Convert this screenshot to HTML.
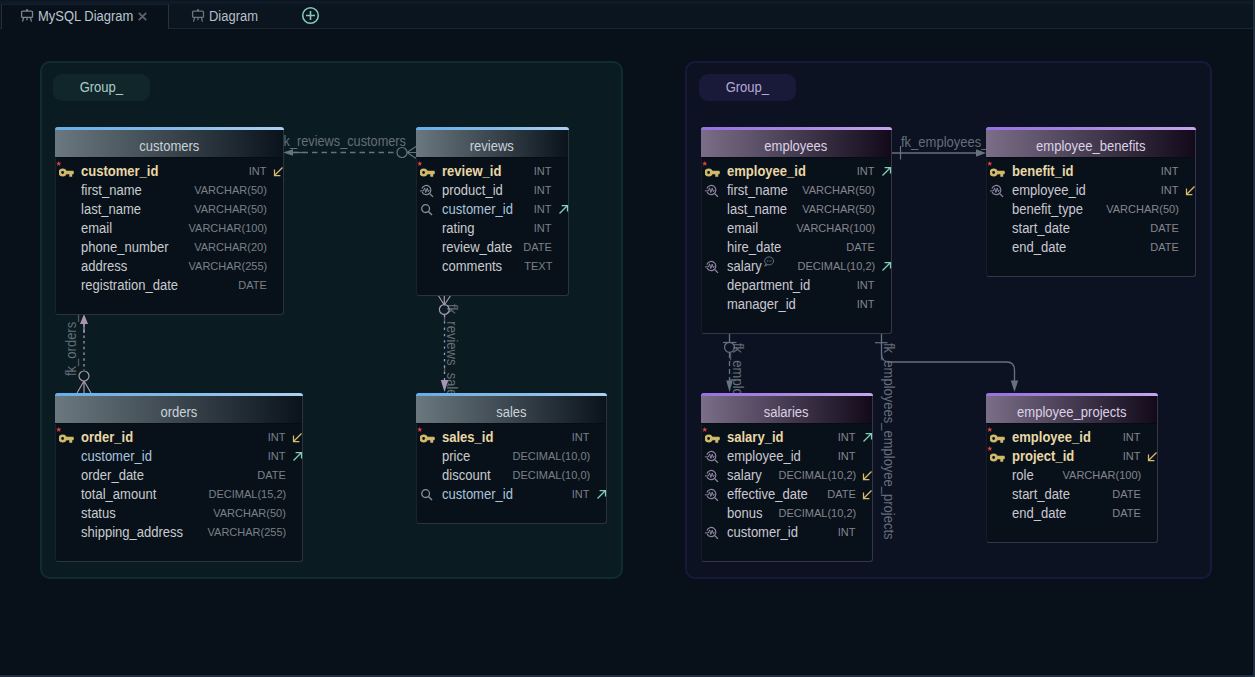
<!DOCTYPE html><html><head><meta charset="utf-8"><style>
*{box-sizing:border-box;margin:0;padding:0}
html,body{width:1255px;height:677px;overflow:hidden;background:#08111a;font-family:"Liberation Sans",sans-serif}
#root{position:relative;width:1255px;height:677px;overflow:hidden;background:#08111a}
.abs{position:absolute}
.tabbar{position:absolute;left:0;top:0;width:1255px;height:29px;background:#0a1520;border-bottom:1px solid #1a2531}
.topline{position:absolute;left:0;top:0;width:1255px;height:4px;background:linear-gradient(#0a121c,#0e1b28 40%,#0d1a26)}
.tab{position:absolute;top:4px;height:26px;font-size:14px;line-height:25px;color:#bcc6cf;transform:scaleX(0.925);transform-origin:0 0}
.grp{position:absolute;border-radius:10px;border:1.5px solid}
.lbl{position:absolute;border-radius:9px;font-size:14px;line-height:26px;text-align:center}
.lbl span{display:inline-block;transform:scaleX(0.93)}
.tb{position:absolute;background:#08111a;border:1px solid;border-radius:3px;overflow:visible}
.acc{position:absolute;left:0;right:-1px;top:0;height:3px;border-radius:3px 3px 0 0}
.hd{position:absolute;left:-1px;top:-1px;right:0;height:31px;border-radius:3px 3px 0 0;padding-top:3px;text-align:center;font-size:13px;line-height:19px;border-bottom:1px solid #060c12}
.hd span{position:relative;top:7px;display:inline-block;font-size:14px;transform:scaleX(0.93);transform-origin:50% 0}
.rw{position:absolute;left:0;right:0;height:19px;font-size:13px;line-height:19px;white-space:nowrap}
.nm{position:absolute;left:25px;top:0;font-size:14px;transform:scaleX(0.93);transform-origin:0 0}
.pk{font-weight:bold;color:#e8d8a6}
.ty{position:absolute;right:16px;font-size:11.5px;line-height:19px;top:0px;transform:scaleX(0.957);transform-origin:100% 0}
.ar{position:absolute;right:-1px;top:4px;width:11px;height:11px;line-height:0}
.star{position:absolute;left:0px;top:-1.5px;line-height:0}
.key{position:absolute;left:3px;top:6px;line-height:0}
.sa{position:absolute;left:2px;top:2px;line-height:0}
.cm{position:relative;top:-4px;left:2px;line-height:0}
svg{display:block}
.cm svg{display:inline-block}
</style></head><body><div id="root">
<div class="tabbar"></div><div class="topline"></div>
<div class="abs" style="left:1px;top:4px;width:168px;height:25px;background:#08111a;border-left:1px solid #223040;border-right:1px solid #263240;border-top:1px solid #18202c"></div>
<div class="abs" style="left:20px;top:8px"><svg width="15" height="15" viewBox="0 0 15 15"><rect x="1.6" y="3.1" width="10.9" height="6.3" rx="1" fill="none" stroke="#7c848c" stroke-width="1.3"/><rect x="6" y="0.9" width="1.9" height="2.3" rx="0.6" fill="#7c848c"/><path d="M3.6 9.8L2.5 13.6M10.4 9.8L11.5 13.6M7 9.8V12.3" stroke="#7c848c" stroke-width="1.3"/></svg></div>
<div class="tab" style="left:38px">MySQL Diagram</div>
<div class="abs" style="left:138px;top:12.3px"><svg width="9" height="9" viewBox="0 0 9 9"><path d="M0.8 0.8L8.2 8.2M8.2 0.8L0.8 8.2" stroke="#5e6268" stroke-width="1.9"/></svg></div>
<div class="abs" style="left:191px;top:8px"><svg width="15" height="15" viewBox="0 0 15 15"><rect x="1.6" y="3.1" width="10.9" height="6.3" rx="1" fill="none" stroke="#6c747c" stroke-width="1.3"/><rect x="6" y="0.9" width="1.9" height="2.3" rx="0.6" fill="#6c747c"/><path d="M3.6 9.8L2.5 13.6M10.4 9.8L11.5 13.6M7 9.8V12.3" stroke="#6c747c" stroke-width="1.3"/></svg></div>
<div class="tab" style="left:209px;color:#b8bfc6">Diagram</div>
<div class="abs" style="left:301px;top:5.5px"><svg width="19" height="19" viewBox="0 0 19 19"><circle cx="9.5" cy="9.5" r="7.8" fill="none" stroke="#84c6b8" stroke-width="1.6"/><path d="M9.5 5V14M5 9.5H14" stroke="#84c6b8" stroke-width="1.6"/></svg></div>
<div class="grp" style="left:40px;top:61px;width:583px;height:518px;background:#0a1b21;border-color:#0f2c32;border-width:2px"></div>
<div class="lbl" style="left:53px;top:74px;width:97px;height:27px;background:#11262a;color:#a9cdc8"><span>Group_</span></div>
<div class="grp" style="left:685px;top:61px;width:527px;height:518px;background:#0c1222;border-color:#19193a;border-width:2px"></div>
<div class="lbl" style="left:699px;top:74px;width:97px;height:27px;background:#19193a;color:#b6aad4"><span>Group_</span></div>
<svg class="abs" style="left:0;top:0" width="1255" height="677" viewBox="0 0 1255 677">
<text transform="translate(280 146) scale(0.91 1)" font-size="14" fill="#646e78" font-family="Liberation Sans">fk_reviews_customers</text>
<path d="M293 152.5H397" stroke="#66727e" stroke-width="1.3" stroke-dasharray="5.5 4" fill="none"/>
<path d="M283 152.5L293 149.2V155.8Z" fill="#66727e"/><path d="M293 152.5H306" stroke="#66727e" stroke-width="1.3"/>
<circle cx="402" cy="152.5" r="5" fill="none" stroke="#66727e" stroke-width="1.2"/>
<path d="M407 152.5L416 146.5M407 152.5H416M407 152.5L417 159" stroke="#66727e" stroke-width="1.2" fill="none"/>
<text transform="translate(76.3 376) rotate(-90) scale(0.93 1)" font-size="14" fill="#646e78" font-family="Liberation Sans">fk_orders_customers</text>
<path d="M84 324V370" stroke="#a896b0" stroke-width="1.3" stroke-dasharray="2.5 3.2" fill="none"/>
<path d="M84 314L80 324H88Z" fill="#a896b0"/><path d="M84 323V333" stroke="#a896b0" stroke-width="1.3"/>
<circle cx="84" cy="376" r="5" fill="none" stroke="#a896b0" stroke-width="1.2"/>
<path d="M84 381L77 393M84 381V393M84 381L91 393" stroke="#a896b0" stroke-width="1.2" fill="none"/>
<text transform="translate(447 304) rotate(90) scale(0.93 1)" font-size="14" fill="#646e78" font-family="Liberation Sans">fk_reviews_sales</text>
<path d="M444.5 315V381" stroke="#a896b0" stroke-width="1.3" stroke-dasharray="2.3 4" fill="none"/>
<path d="M444.5 392L440.8 380H448.2Z" fill="#a896b0"/>
<circle cx="444.3" cy="309.5" r="4.9" fill="none" stroke="#a896b0" stroke-width="1.2"/>
<path d="M444.3 305L438 295M444.3 305V295M444.3 305L451 295" stroke="#a896b0" stroke-width="1.2" fill="none"/>
<text transform="translate(901 146.5) scale(0.93 1)" font-size="14" fill="#646e78" font-family="Liberation Sans">fk_employees_benefits</text>
<path d="M891 153H977" stroke="#66727e" stroke-width="1.4" fill="none"/>
<path d="M986 153L976 149.3V156.7Z" fill="#66727e"/><path d="M900.5 146V159.5" stroke="#66727e" stroke-width="1.2"/>
<text transform="translate(732.5 343) rotate(90) scale(0.93 1)" font-size="14" fill="#646e78" font-family="Liberation Sans">fk_employees_salaries</text>
<path d="M729.5 333V342" stroke="#66727e" stroke-width="1.3" fill="none" /><path d="M729.5 353V381" stroke="#66727e" stroke-width="1.3" fill="none" stroke-dasharray="5 3"/>
<path d="M729.5 392L726.2 380.5H732.8Z" fill="#66727e"/><path d="M723 342.5H736.5" stroke="#66727e" stroke-width="1.2"/>
<circle cx="729.5" cy="347.3" r="5" fill="none" stroke="#66727e" stroke-width="1.2"/>
<text transform="translate(884 343) rotate(90) scale(0.93 1)" font-size="14" fill="#646e78" font-family="Liberation Sans">fk_employees_employee_projects</text>
<path d="M881.5 333V354Q881.5 362 889.5 362H1006.5Q1014.5 362 1014.5 370V381" stroke="#66727e" stroke-width="1.3" fill="none"/>
<path d="M1014.5 392L1010.8 380.5H1018.2Z" fill="#66727e"/><path d="M875 342.7H887.5" stroke="#66727e" stroke-width="1.2"/>
</svg>
<div class="tb" style="left:55px;top:127px;width:229px;height:188px;border-color:#18222c;border-right-color:#29343e;border-bottom-color:#29343e">
<div class="hd" style="background:linear-gradient(90deg,#6b7880,#0a131b)"><div class="acc" style="background:linear-gradient(90deg,#68aeea,#84bae8 50%,#acd0f0)"></div><span style="color:#c9d3da">customers</span></div>
<div class="rw" style="top:34px"><span class="star"><svg width="5.5" height="5.5" viewBox="0 0 10 10"><path d="M5 0L6.2 3.4H9.8L6.9 5.6L8 9.2L5 7L2 9.2L3.1 5.6L0.2 3.4H3.8Z" fill="#e0433f"/></svg></span><span class="key"><svg class="ic" width="16" height="10" viewBox="0 0 16 10"><circle cx="3.6" cy="4.5" r="2.75" fill="none" stroke="#d0b86a" stroke-width="2.7"/><path d="M6 2.8H14.3L15 4.5L14.3 6.2H13.2V8.7H10.3V6.2H6Z" fill="#d0b86a"/></svg></span><span class="nm pk" style="">customer_id</span><span class="ty" style="color:#7a8086">INT</span><span class="ar"><svg width="11" height="11" viewBox="0 0 11 11"><path d="M9.5 1.5L1.5 9.5M1.5 3.6V9.5H7.4" fill="none" stroke="#d6bb6a" stroke-width="1.25"/></svg></span></div>
<div class="rw" style="top:53px"><span class="nm" style="color:#c9ccce">first_name</span><span class="ty" style="color:#7a8086">VARCHAR(50)</span></div>
<div class="rw" style="top:72px"><span class="nm" style="color:#c9ccce">last_name</span><span class="ty" style="color:#7a8086">VARCHAR(50)</span></div>
<div class="rw" style="top:91px"><span class="nm" style="color:#c9ccce">email</span><span class="ty" style="color:#7a8086">VARCHAR(100)</span></div>
<div class="rw" style="top:110px"><span class="nm" style="color:#c9ccce">phone_number</span><span class="ty" style="color:#7a8086">VARCHAR(20)</span></div>
<div class="rw" style="top:129px"><span class="nm" style="color:#c9ccce">address</span><span class="ty" style="color:#7a8086">VARCHAR(255)</span></div>
<div class="rw" style="top:148px"><span class="nm" style="color:#c9ccce">registration_date</span><span class="ty" style="color:#7a8086">DATE</span></div>
</div>
<div class="tb" style="left:416px;top:127px;width:153px;height:169px;border-color:#18222c;border-right-color:#29343e;border-bottom-color:#29343e">
<div class="hd" style="background:linear-gradient(90deg,#6b7880,#0a131b)"><div class="acc" style="background:linear-gradient(90deg,#68aeea,#84bae8 50%,#acd0f0)"></div><span style="color:#c9d3da">reviews</span></div>
<div class="rw" style="top:34px"><span class="star"><svg width="5.5" height="5.5" viewBox="0 0 10 10"><path d="M5 0L6.2 3.4H9.8L6.9 5.6L8 9.2L5 7L2 9.2L3.1 5.6L0.2 3.4H3.8Z" fill="#e0433f"/></svg></span><span class="key"><svg class="ic" width="16" height="10" viewBox="0 0 16 10"><circle cx="3.6" cy="4.5" r="2.75" fill="none" stroke="#d0b86a" stroke-width="2.7"/><path d="M6 2.8H14.3L15 4.5L14.3 6.2H13.2V8.7H10.3V6.2H6Z" fill="#d0b86a"/></svg></span><span class="nm pk" style="">review_id</span><span class="ty" style="color:#7a8086">INT</span></div>
<div class="rw" style="top:53px"><span class="sa"><svg class="ic" width="16" height="16" viewBox="0 0 16 16"><path d="M2.9 5.6A4.6 4.6 0 1 1 3.1 9" fill="none" stroke="#88909a" stroke-width="1.15"/><path d="M10.9 10.7L14 13.9" stroke="#88909a" stroke-width="1.25"/><path d="M0.9 7.9H4.4L5.6 4.9L6.8 9.5L8.2 5.1L9.4 8.7L10.3 6.9" fill="none" stroke="#88909a" stroke-width="1"/></svg></span><span class="nm" style="color:#c9ccce">product_id</span><span class="ty" style="color:#7a8086">INT</span></div>
<div class="rw" style="top:72px"><span class="sa"><svg class="ic" width="16" height="16" viewBox="0 0 16 16"><circle cx="6.6" cy="6.6" r="3.9" fill="none" stroke="#88909a" stroke-width="1.3"/><path d="M9.4 9.4L13 13" stroke="#88909a" stroke-width="1.4"/></svg></span><span class="nm" style="color:#abc4dc">customer_id</span><span class="ty" style="color:#7a8086">INT</span><span class="ar"><svg width="11" height="11" viewBox="0 0 11 11"><path d="M1.5 9.5L9.5 1.5M3.6 1.5H9.5V7.4" fill="none" stroke="#84ceb8" stroke-width="1.25"/></svg></span></div>
<div class="rw" style="top:91px"><span class="nm" style="color:#c9ccce">rating</span><span class="ty" style="color:#7a8086">INT</span></div>
<div class="rw" style="top:110px"><span class="nm" style="color:#c9ccce">review_date</span><span class="ty" style="color:#7a8086">DATE</span></div>
<div class="rw" style="top:129px"><span class="nm" style="color:#c9ccce">comments</span><span class="ty" style="color:#7a8086">TEXT</span></div>
</div>
<div class="tb" style="left:55px;top:393px;width:248px;height:169px;border-color:#18222c;border-right-color:#29343e;border-bottom-color:#29343e">
<div class="hd" style="background:linear-gradient(90deg,#6b7880,#0a131b)"><div class="acc" style="background:linear-gradient(90deg,#68aeea,#84bae8 50%,#acd0f0)"></div><span style="color:#c9d3da">orders</span></div>
<div class="rw" style="top:34px"><span class="star"><svg width="5.5" height="5.5" viewBox="0 0 10 10"><path d="M5 0L6.2 3.4H9.8L6.9 5.6L8 9.2L5 7L2 9.2L3.1 5.6L0.2 3.4H3.8Z" fill="#e0433f"/></svg></span><span class="key"><svg class="ic" width="16" height="10" viewBox="0 0 16 10"><circle cx="3.6" cy="4.5" r="2.75" fill="none" stroke="#d0b86a" stroke-width="2.7"/><path d="M6 2.8H14.3L15 4.5L14.3 6.2H13.2V8.7H10.3V6.2H6Z" fill="#d0b86a"/></svg></span><span class="nm pk" style="">order_id</span><span class="ty" style="color:#7a8086">INT</span><span class="ar"><svg width="11" height="11" viewBox="0 0 11 11"><path d="M9.5 1.5L1.5 9.5M1.5 3.6V9.5H7.4" fill="none" stroke="#d6bb6a" stroke-width="1.25"/></svg></span></div>
<div class="rw" style="top:53px"><span class="nm" style="color:#abc4dc">customer_id</span><span class="ty" style="color:#7a8086">INT</span><span class="ar"><svg width="11" height="11" viewBox="0 0 11 11"><path d="M1.5 9.5L9.5 1.5M3.6 1.5H9.5V7.4" fill="none" stroke="#84ceb8" stroke-width="1.25"/></svg></span></div>
<div class="rw" style="top:72px"><span class="nm" style="color:#c9ccce">order_date</span><span class="ty" style="color:#7a8086">DATE</span></div>
<div class="rw" style="top:91px"><span class="nm" style="color:#c9ccce">total_amount</span><span class="ty" style="color:#7a8086">DECIMAL(15,2)</span></div>
<div class="rw" style="top:110px"><span class="nm" style="color:#c9ccce">status</span><span class="ty" style="color:#7a8086">VARCHAR(50)</span></div>
<div class="rw" style="top:129px"><span class="nm" style="color:#c9ccce">shipping_address</span><span class="ty" style="color:#7a8086">VARCHAR(255)</span></div>
</div>
<div class="tb" style="left:416px;top:393px;width:191px;height:131px;border-color:#18222c;border-right-color:#29343e;border-bottom-color:#29343e">
<div class="hd" style="background:linear-gradient(90deg,#6b7880,#0a131b)"><div class="acc" style="background:linear-gradient(90deg,#68aeea,#84bae8 50%,#acd0f0)"></div><span style="color:#c9d3da">sales</span></div>
<div class="rw" style="top:34px"><span class="star"><svg width="5.5" height="5.5" viewBox="0 0 10 10"><path d="M5 0L6.2 3.4H9.8L6.9 5.6L8 9.2L5 7L2 9.2L3.1 5.6L0.2 3.4H3.8Z" fill="#e0433f"/></svg></span><span class="key"><svg class="ic" width="16" height="10" viewBox="0 0 16 10"><circle cx="3.6" cy="4.5" r="2.75" fill="none" stroke="#d0b86a" stroke-width="2.7"/><path d="M6 2.8H14.3L15 4.5L14.3 6.2H13.2V8.7H10.3V6.2H6Z" fill="#d0b86a"/></svg></span><span class="nm pk" style="">sales_id</span><span class="ty" style="color:#7a8086">INT</span></div>
<div class="rw" style="top:53px"><span class="nm" style="color:#c9ccce">price</span><span class="ty" style="color:#7a8086">DECIMAL(10,0)</span></div>
<div class="rw" style="top:72px"><span class="nm" style="color:#c9ccce">discount</span><span class="ty" style="color:#7a8086">DECIMAL(10,0)</span></div>
<div class="rw" style="top:91px"><span class="sa"><svg class="ic" width="16" height="16" viewBox="0 0 16 16"><circle cx="6.6" cy="6.6" r="3.9" fill="none" stroke="#88909a" stroke-width="1.3"/><path d="M9.4 9.4L13 13" stroke="#88909a" stroke-width="1.4"/></svg></span><span class="nm" style="color:#abc4dc">customer_id</span><span class="ty" style="color:#7a8086">INT</span><span class="ar"><svg width="11" height="11" viewBox="0 0 11 11"><path d="M1.5 9.5L9.5 1.5M3.6 1.5H9.5V7.4" fill="none" stroke="#84ceb8" stroke-width="1.25"/></svg></span></div>
</div>
<div class="tb" style="left:701px;top:127px;width:191px;height:207px;border-color:#1a1a28;border-right-color:#363648;border-bottom-color:#363648">
<div class="hd" style="background:linear-gradient(90deg,#7a6e88,#12091a)"><div class="acc" style="background:linear-gradient(90deg,#9a6ee4,#aa88e0 50%,#c6a6ee)"></div><span style="color:#dcd2e6">employees</span></div>
<div class="rw" style="top:34px"><span class="star"><svg width="5.5" height="5.5" viewBox="0 0 10 10"><path d="M5 0L6.2 3.4H9.8L6.9 5.6L8 9.2L5 7L2 9.2L3.1 5.6L0.2 3.4H3.8Z" fill="#e0433f"/></svg></span><span class="key"><svg class="ic" width="16" height="10" viewBox="0 0 16 10"><circle cx="3.6" cy="4.5" r="2.75" fill="none" stroke="#d0b86a" stroke-width="2.7"/><path d="M6 2.8H14.3L15 4.5L14.3 6.2H13.2V8.7H10.3V6.2H6Z" fill="#d0b86a"/></svg></span><span class="nm pk" style="">employee_id</span><span class="ty" style="color:#86848c">INT</span><span class="ar"><svg width="11" height="11" viewBox="0 0 11 11"><path d="M1.5 9.5L9.5 1.5M3.6 1.5H9.5V7.4" fill="none" stroke="#84ceb8" stroke-width="1.25"/></svg></span></div>
<div class="rw" style="top:53px"><span class="sa"><svg class="ic" width="16" height="16" viewBox="0 0 16 16"><path d="M2.9 5.6A4.6 4.6 0 1 1 3.1 9" fill="none" stroke="#8e86a0" stroke-width="1.15"/><path d="M10.9 10.7L14 13.9" stroke="#8e86a0" stroke-width="1.25"/><path d="M0.9 7.9H4.4L5.6 4.9L6.8 9.5L8.2 5.1L9.4 8.7L10.3 6.9" fill="none" stroke="#8e86a0" stroke-width="1"/></svg></span><span class="nm" style="color:#cbc8d2">first_name</span><span class="ty" style="color:#86848c">VARCHAR(50)</span></div>
<div class="rw" style="top:72px"><span class="nm" style="color:#cbc8d2">last_name</span><span class="ty" style="color:#86848c">VARCHAR(50)</span></div>
<div class="rw" style="top:91px"><span class="nm" style="color:#cbc8d2">email</span><span class="ty" style="color:#86848c">VARCHAR(100)</span></div>
<div class="rw" style="top:110px"><span class="nm" style="color:#cbc8d2">hire_date</span><span class="ty" style="color:#86848c">DATE</span></div>
<div class="rw" style="top:129px"><span class="sa"><svg class="ic" width="16" height="16" viewBox="0 0 16 16"><path d="M2.9 5.6A4.6 4.6 0 1 1 3.1 9" fill="none" stroke="#8e86a0" stroke-width="1.15"/><path d="M10.9 10.7L14 13.9" stroke="#8e86a0" stroke-width="1.25"/><path d="M0.9 7.9H4.4L5.6 4.9L6.8 9.5L8.2 5.1L9.4 8.7L10.3 6.9" fill="none" stroke="#8e86a0" stroke-width="1"/></svg></span><span class="nm" style="color:#cbc8d2">salary<span class="cm"><svg width="12" height="11" viewBox="0 0 12 11"><ellipse cx="6.3" cy="4.9" rx="4.8" ry="4" fill="none" stroke="#767c86" stroke-width="0.9"/><path d="M2.6 8L1.6 10.2L4.6 8.7" fill="none" stroke="#767c86" stroke-width="0.9"/><path d="M3.9 5H5.1M5.9 5H6.7M7.5 5H8.7" stroke="#767c86" stroke-width="1"/></svg></span></span><span class="ty" style="color:#86848c">DECIMAL(10,2)</span><span class="ar"><svg width="11" height="11" viewBox="0 0 11 11"><path d="M1.5 9.5L9.5 1.5M3.6 1.5H9.5V7.4" fill="none" stroke="#84ceb8" stroke-width="1.25"/></svg></span></div>
<div class="rw" style="top:148px"><span class="nm" style="color:#cbc8d2">department_id</span><span class="ty" style="color:#86848c">INT</span></div>
<div class="rw" style="top:167px"><span class="nm" style="color:#cbc8d2">manager_id</span><span class="ty" style="color:#86848c">INT</span></div>
</div>
<div class="tb" style="left:986px;top:127px;width:210px;height:150px;border-color:#1a1a28;border-right-color:#363648;border-bottom-color:#363648">
<div class="hd" style="background:linear-gradient(90deg,#7a6e88,#12091a)"><div class="acc" style="background:linear-gradient(90deg,#9a6ee4,#aa88e0 50%,#c6a6ee)"></div><span style="color:#dcd2e6">employee_benefits</span></div>
<div class="rw" style="top:34px"><span class="star"><svg width="5.5" height="5.5" viewBox="0 0 10 10"><path d="M5 0L6.2 3.4H9.8L6.9 5.6L8 9.2L5 7L2 9.2L3.1 5.6L0.2 3.4H3.8Z" fill="#e0433f"/></svg></span><span class="key"><svg class="ic" width="16" height="10" viewBox="0 0 16 10"><circle cx="3.6" cy="4.5" r="2.75" fill="none" stroke="#d0b86a" stroke-width="2.7"/><path d="M6 2.8H14.3L15 4.5L14.3 6.2H13.2V8.7H10.3V6.2H6Z" fill="#d0b86a"/></svg></span><span class="nm pk" style="">benefit_id</span><span class="ty" style="color:#86848c">INT</span></div>
<div class="rw" style="top:53px"><span class="sa"><svg class="ic" width="16" height="16" viewBox="0 0 16 16"><path d="M2.9 5.6A4.6 4.6 0 1 1 3.1 9" fill="none" stroke="#8e86a0" stroke-width="1.15"/><path d="M10.9 10.7L14 13.9" stroke="#8e86a0" stroke-width="1.25"/><path d="M0.9 7.9H4.4L5.6 4.9L6.8 9.5L8.2 5.1L9.4 8.7L10.3 6.9" fill="none" stroke="#8e86a0" stroke-width="1"/></svg></span><span class="nm" style="color:#cbc8d2">employee_id</span><span class="ty" style="color:#86848c">INT</span><span class="ar"><svg width="11" height="11" viewBox="0 0 11 11"><path d="M9.5 1.5L1.5 9.5M1.5 3.6V9.5H7.4" fill="none" stroke="#d6bb6a" stroke-width="1.25"/></svg></span></div>
<div class="rw" style="top:72px"><span class="nm" style="color:#cbc8d2">benefit_type</span><span class="ty" style="color:#86848c">VARCHAR(50)</span></div>
<div class="rw" style="top:91px"><span class="nm" style="color:#cbc8d2">start_date</span><span class="ty" style="color:#86848c">DATE</span></div>
<div class="rw" style="top:110px"><span class="nm" style="color:#cbc8d2">end_date</span><span class="ty" style="color:#86848c">DATE</span></div>
</div>
<div class="tb" style="left:701px;top:393px;width:172px;height:169px;border-color:#1a1a28;border-right-color:#363648;border-bottom-color:#363648">
<div class="hd" style="background:linear-gradient(90deg,#7a6e88,#12091a)"><div class="acc" style="background:linear-gradient(90deg,#9a6ee4,#aa88e0 50%,#c6a6ee)"></div><span style="color:#dcd2e6">salaries</span></div>
<div class="rw" style="top:34px"><span class="star"><svg width="5.5" height="5.5" viewBox="0 0 10 10"><path d="M5 0L6.2 3.4H9.8L6.9 5.6L8 9.2L5 7L2 9.2L3.1 5.6L0.2 3.4H3.8Z" fill="#e0433f"/></svg></span><span class="key"><svg class="ic" width="16" height="10" viewBox="0 0 16 10"><circle cx="3.6" cy="4.5" r="2.75" fill="none" stroke="#d0b86a" stroke-width="2.7"/><path d="M6 2.8H14.3L15 4.5L14.3 6.2H13.2V8.7H10.3V6.2H6Z" fill="#d0b86a"/></svg></span><span class="nm pk" style="">salary_id</span><span class="ty" style="color:#86848c">INT</span><span class="ar"><svg width="11" height="11" viewBox="0 0 11 11"><path d="M1.5 9.5L9.5 1.5M3.6 1.5H9.5V7.4" fill="none" stroke="#84ceb8" stroke-width="1.25"/></svg></span></div>
<div class="rw" style="top:53px"><span class="sa"><svg class="ic" width="16" height="16" viewBox="0 0 16 16"><path d="M2.9 5.6A4.6 4.6 0 1 1 3.1 9" fill="none" stroke="#8e86a0" stroke-width="1.15"/><path d="M10.9 10.7L14 13.9" stroke="#8e86a0" stroke-width="1.25"/><path d="M0.9 7.9H4.4L5.6 4.9L6.8 9.5L8.2 5.1L9.4 8.7L10.3 6.9" fill="none" stroke="#8e86a0" stroke-width="1"/></svg></span><span class="nm" style="color:#cbc8d2">employee_id</span><span class="ty" style="color:#86848c">INT</span></div>
<div class="rw" style="top:72px"><span class="sa"><svg class="ic" width="16" height="16" viewBox="0 0 16 16"><path d="M2.9 5.6A4.6 4.6 0 1 1 3.1 9" fill="none" stroke="#8e86a0" stroke-width="1.15"/><path d="M10.9 10.7L14 13.9" stroke="#8e86a0" stroke-width="1.25"/><path d="M0.9 7.9H4.4L5.6 4.9L6.8 9.5L8.2 5.1L9.4 8.7L10.3 6.9" fill="none" stroke="#8e86a0" stroke-width="1"/></svg></span><span class="nm" style="color:#cbc8d2">salary</span><span class="ty" style="color:#86848c">DECIMAL(10,2)</span><span class="ar"><svg width="11" height="11" viewBox="0 0 11 11"><path d="M9.5 1.5L1.5 9.5M1.5 3.6V9.5H7.4" fill="none" stroke="#d6bb6a" stroke-width="1.25"/></svg></span></div>
<div class="rw" style="top:91px"><span class="sa"><svg class="ic" width="16" height="16" viewBox="0 0 16 16"><path d="M2.9 5.6A4.6 4.6 0 1 1 3.1 9" fill="none" stroke="#8e86a0" stroke-width="1.15"/><path d="M10.9 10.7L14 13.9" stroke="#8e86a0" stroke-width="1.25"/><path d="M0.9 7.9H4.4L5.6 4.9L6.8 9.5L8.2 5.1L9.4 8.7L10.3 6.9" fill="none" stroke="#8e86a0" stroke-width="1"/></svg></span><span class="nm" style="color:#cbc8d2">effective_date</span><span class="ty" style="color:#86848c">DATE</span><span class="ar"><svg width="11" height="11" viewBox="0 0 11 11"><path d="M9.5 1.5L1.5 9.5M1.5 3.6V9.5H7.4" fill="none" stroke="#d6bb6a" stroke-width="1.25"/></svg></span></div>
<div class="rw" style="top:110px"><span class="nm" style="color:#cbc8d2">bonus</span><span class="ty" style="color:#86848c">DECIMAL(10,2)</span></div>
<div class="rw" style="top:129px"><span class="sa"><svg class="ic" width="16" height="16" viewBox="0 0 16 16"><path d="M2.9 5.6A4.6 4.6 0 1 1 3.1 9" fill="none" stroke="#8e86a0" stroke-width="1.15"/><path d="M10.9 10.7L14 13.9" stroke="#8e86a0" stroke-width="1.25"/><path d="M0.9 7.9H4.4L5.6 4.9L6.8 9.5L8.2 5.1L9.4 8.7L10.3 6.9" fill="none" stroke="#8e86a0" stroke-width="1"/></svg></span><span class="nm" style="color:#cbc8d2">customer_id</span><span class="ty" style="color:#86848c">INT</span></div>
</div>
<div class="tb" style="left:986px;top:393px;width:172px;height:150px;border-color:#1a1a28;border-right-color:#363648;border-bottom-color:#363648">
<div class="hd" style="background:linear-gradient(90deg,#7a6e88,#12091a)"><div class="acc" style="background:linear-gradient(90deg,#9a6ee4,#aa88e0 50%,#c6a6ee)"></div><span style="color:#dcd2e6">employee_projects</span></div>
<div class="rw" style="top:34px"><span class="star"><svg width="5.5" height="5.5" viewBox="0 0 10 10"><path d="M5 0L6.2 3.4H9.8L6.9 5.6L8 9.2L5 7L2 9.2L3.1 5.6L0.2 3.4H3.8Z" fill="#e0433f"/></svg></span><span class="key"><svg class="ic" width="16" height="10" viewBox="0 0 16 10"><circle cx="3.6" cy="4.5" r="2.75" fill="none" stroke="#d0b86a" stroke-width="2.7"/><path d="M6 2.8H14.3L15 4.5L14.3 6.2H13.2V8.7H10.3V6.2H6Z" fill="#d0b86a"/></svg></span><span class="nm pk" style="">employee_id</span><span class="ty" style="color:#86848c">INT</span></div>
<div class="rw" style="top:53px"><span class="star"><svg width="5.5" height="5.5" viewBox="0 0 10 10"><path d="M5 0L6.2 3.4H9.8L6.9 5.6L8 9.2L5 7L2 9.2L3.1 5.6L0.2 3.4H3.8Z" fill="#e0433f"/></svg></span><span class="key"><svg class="ic" width="16" height="10" viewBox="0 0 16 10"><circle cx="3.6" cy="4.5" r="2.75" fill="none" stroke="#d0b86a" stroke-width="2.7"/><path d="M6 2.8H14.3L15 4.5L14.3 6.2H13.2V8.7H10.3V6.2H6Z" fill="#d0b86a"/></svg></span><span class="nm pk" style="">project_id</span><span class="ty" style="color:#86848c">INT</span><span class="ar"><svg width="11" height="11" viewBox="0 0 11 11"><path d="M9.5 1.5L1.5 9.5M1.5 3.6V9.5H7.4" fill="none" stroke="#d6bb6a" stroke-width="1.25"/></svg></span></div>
<div class="rw" style="top:72px"><span class="nm" style="color:#cbc8d2">role</span><span class="ty" style="color:#86848c">VARCHAR(100)</span></div>
<div class="rw" style="top:91px"><span class="nm" style="color:#cbc8d2">start_date</span><span class="ty" style="color:#86848c">DATE</span></div>
<div class="rw" style="top:110px"><span class="nm" style="color:#cbc8d2">end_date</span><span class="ty" style="color:#86848c">DATE</span></div>
</div>
<div class="abs" style="left:1252px;top:30px;width:1px;height:645px;background:#060c14"></div><div class="abs" style="left:0;top:674px;width:1253px;height:1px;background:#060c14"></div>
<div class="abs" style="left:1253px;top:0;width:2px;height:677px;background:#222e3d"></div>
<div class="abs" style="left:0;top:675px;width:1255px;height:2px;background:#222e3d"></div>
</div></body></html>
